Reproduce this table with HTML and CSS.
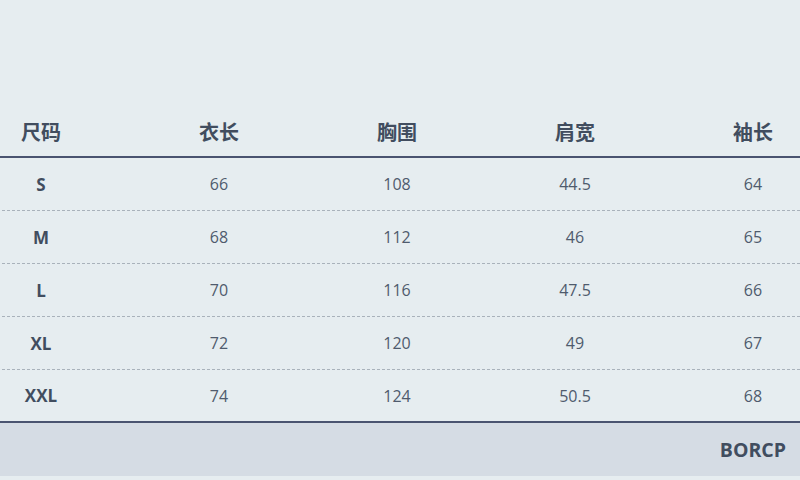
FILE: index.html
```html
<!DOCTYPE html>
<html lang="zh">
<head>
<meta charset="utf-8">
<link rel="stylesheet" href="styles.css">
</head>
<body>
<div class="page">
  <div class="table">
    <div class="row head">
      <div class="cell">尺码</div>
      <div class="cell">衣长</div>
      <div class="cell">胸围</div>
      <div class="cell">肩宽</div>
      <div class="cell">袖长</div>
    </div>
    <div class="row">
      <div class="cell size">S</div>
      <div class="cell">66</div>
      <div class="cell">108</div>
      <div class="cell">44.5</div>
      <div class="cell">64</div>
    </div>
    <div class="row">
      <div class="cell size">M</div>
      <div class="cell">68</div>
      <div class="cell">112</div>
      <div class="cell">46</div>
      <div class="cell">65</div>
    </div>
    <div class="row">
      <div class="cell size">L</div>
      <div class="cell">70</div>
      <div class="cell">116</div>
      <div class="cell">47.5</div>
      <div class="cell">66</div>
    </div>
    <div class="row">
      <div class="cell size">XL</div>
      <div class="cell">72</div>
      <div class="cell">120</div>
      <div class="cell">49</div>
      <div class="cell">67</div>
    </div>
    <div class="row last">
      <div class="cell size">XXL</div>
      <div class="cell">74</div>
      <div class="cell">124</div>
      <div class="cell">50.5</div>
      <div class="cell">68</div>
    </div>
  </div>
  <div class="footer">BORCP</div>
</div>
</body>
</html>
```

FILE: styles.css
```css
html, body {
  margin: 0;
  padding: 0;
  width: 800px;
  height: 480px;
  overflow: hidden;
  background: #e6edf0;
}

.page {
  padding-top: 106px;
  font-family: "Open Sans", "Noto Sans CJK SC", sans-serif;
  color: #4a5568;
}

.table {
  width: 800px;
  overflow: hidden;
}

.row {
  display: grid;
  grid-template-columns: repeat(5, 178px);
  margin-left: -48px;
  width: 848px;
  height: 52px;
  border-bottom: 1px dashed #a9b2bb;
  align-items: center;
}

.cell {
  text-align: center;
  font-size: 16px;
  color: #4f5b6d;
}

.row.head {
  height: 50px;
  border-bottom: 2px solid #4a5470;
}

.row.head .cell {
  font-family: "Noto Sans CJK SC", sans-serif;
  font-weight: 700;
  font-size: 20px;
  color: #414d5f;
}

.row.last {
  height: 51px;
  border-bottom: 2px solid #4a5470;
}

.cell.size {
  font-weight: 700;
  font-size: 17px;
  color: #414d5f;
}

.footer {
  height: 53px;
  background: #d5dce4;
  display: flex;
  align-items: center;
  justify-content: flex-end;
  padding-right: 14px;
  font-weight: 700;
  font-size: 19.5px;
  color: #414d5f;
}
```
